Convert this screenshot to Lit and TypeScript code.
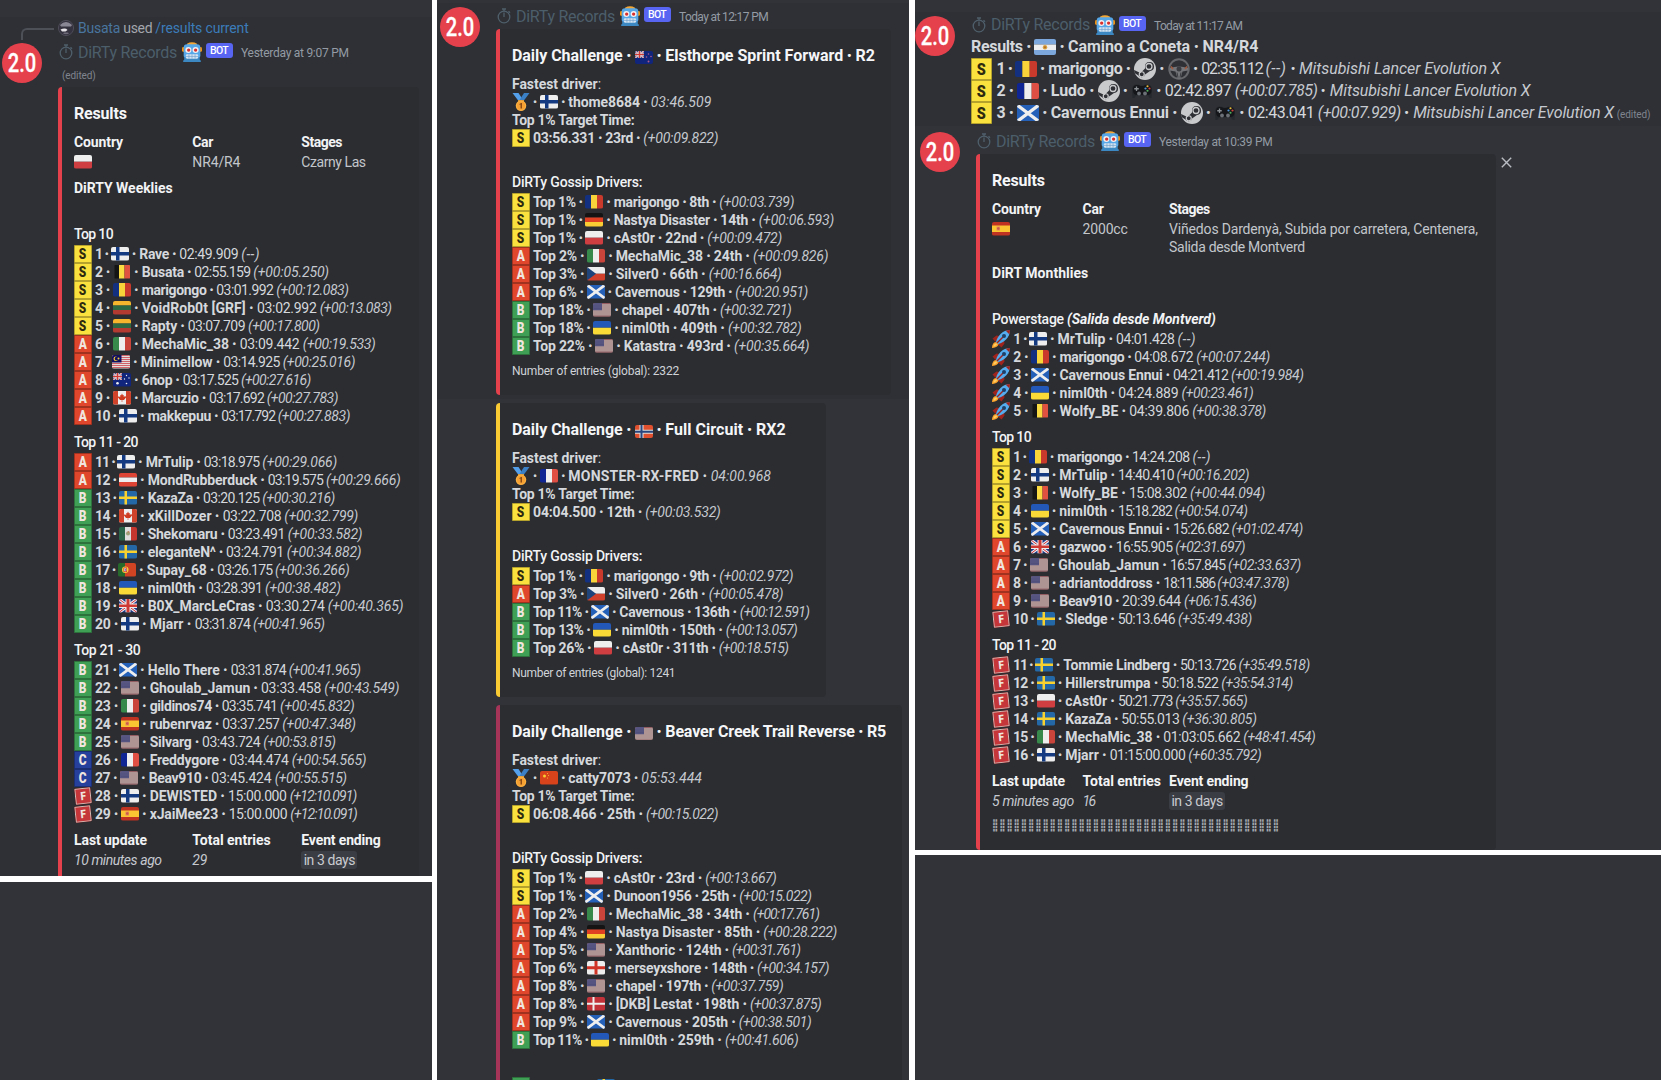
import { LitElement, html, css, svg, nothing, TemplateResult } from "lit";
import { customElement } from "lit/decorators.js";

/* Horizontal measures in the data are in thirds of a pixel. */
const U = 3;

type Part = TemplateResult | typeof nothing;

const px = (n: number) => `width:${(n / U).toFixed(2)}px`;

const point = html`<i class="pt">•</i>`;

/** A run of text whose tracking is adjusted so that it fills `w`. */
const fit = (text: string, w: number, cls = ""): Part =>
  html`<span class="fit ${cls}" style=${px(w)} data-w=${w / U}>${text.split("•").map((s, n) => (n ? [point, s] : s))}</span>`;

const dotBetween = (w: number): Part => html`<span class="mid" style=${px(w)}>${point}</span>`;

/* ---------- flags ---------- */
const r = (x: number, y: number, w: number, h: number, f: string) =>
  svg`<rect x=${x} y=${y} width=${w} height=${h} fill=${f}></rect>`;
const tri = (a: string, b: string, c: string) => [r(0, 0, 12, 27, a), r(12, 0, 12, 27, b), r(24, 0, 12, 27, c)];
const bars = (a: string, b: string, c: string) => [r(0, 0, 36, 9, a), r(0, 9, 36, 9, b), r(0, 18, 36, 9, c)];
const cross = (bg: string, fg: string) => [r(0, 0, 36, 27, bg), r(10, 0, 7, 27, fg), r(0, 10, 36, 7, fg)];
const union = (w: number, h: number) => svg`
  <svg x="0" y="0" width=${w} height=${h} viewBox="0 0 36 27" preserveAspectRatio="none">
    ${r(0, 0, 36, 27, "#1f3a86")}
    <path d="M0 0L36 27M36 0L0 27" stroke="#eee" stroke-width="6"></path>
    <path d="M0 0L36 27M36 0L0 27" stroke="#cf2b35" stroke-width="2"></path>
    ${r(13, 0, 10, 27, "#eee")}${r(0, 9, 36, 9, "#eee")}
    ${r(15, 0, 6, 27, "#cf3a35")}${r(0, 11, 36, 5, "#cf3a35")}
  </svg>`;
const star = (x: number, y: number, s = 1.5, f = "#eee") => svg`<circle cx=${x} cy=${y} r=${s} fill=${f}></circle>`;
const leaf = svg`<path d="M18 5l2 4 2-1-.6 4 3-2 2 2.500-4.500 5.500H14.100L9.600 12.500l2-2 3 2-.6-4.500 2 1zM17.400 17h1.200v5h-1.200z" fill="#cf3b1f"></path>`;

const FLAGS: Record<string, () => unknown> = {
  fi: () => cross("#eeeeee", "#143a82"),
  se: () => [r(0, 0, 36, 27, "#2468a8"), r(11, 0, 5, 27, "#f8d12e"), r(0, 11, 36, 5, "#f8d12e")],
  dk: () => [r(0, 0, 36, 27, "#c23038"), r(11, 0, 4, 27, "#eee"), r(0, 11.5, 36, 4, "#eee")],
  no: () => [r(0, 0, 36, 27, "#e0502f"), r(9, 0, 8, 27, "#ddd"), r(0, 9.5, 36, 8, "#ddd"), r(11, 0, 4, 27, "#29467e"), r(0, 11.5, 36, 4, "#29467e")],
  en: () => [r(0, 0, 36, 27, "#eee"), r(15, 0, 6, 27, "#cf3427"), r(0, 10.5, 36, 6, "#cf3427")],
  ro: () => tri("#12307f", "#f8d43a", "#c9392c"),
  fr: () => tri("#0f2593", "#eeeeee", "#e04f43"),
  it: () => tri("#36894a", "#eeeeee", "#c9453c"),
  mx: () => [tri("#2a6549", "#dddddd", "#c5362e"), star(18, 13, 4, "#9aa27a"), star(19, 10, 2, "#b98a62")],
  be: () => [r(3, 0, 9, 27, "#141414"), r(12, 0, 11, 27, "#fadc42"), r(23, 0, 11, 27, "#e0513f")],
  lt: () => bars("#f5b52c", "#2d6a44", "#b23a30"),
  at: () => bars("#dd4433", "#eeeeee", "#dd4433"),
  de: () => bars("#141414", "#df4023", "#f9cd33"),
  ar: () => [bars("#7ba7dc", "#eeeeee", "#7ba7dc"), star(18, 13.5, 3.6, "#d99f3c"), star(18, 13.5, 1.8, "#b0702a")],
  pl: () => [r(0, 0, 36, 13.5, "#eeeeee"), r(0, 13.5, 36, 13.5, "#cf3f41")],
  ua: () => [r(0, 0, 36, 13.5, "#2358b8"), r(0, 13.5, 36, 13.5, "#f9da37")],
  es: () => [r(0, 0, 36, 27, "#bf3322"), r(0, 7, 36, 13, "#fac632"), r(9, 9, 7, 8, "#e58a5c"), star(12.5, 13, 2.4, "#c9574a")],
  cn: () => [r(0, 0, 36, 27, "#d8431b"), star(9, 10, 3, "#f8cd32"), star(15, 5, 1, "#f8cd32"), star(17, 9, 1, "#f8cd32"), star(15, 14, 1, "#f8cd32")],
  cz: () => [r(0, 0, 36, 13.5, "#eeeeee"), r(0, 13.5, 36, 13.5, "#d0402a"), svg`<path d="M0 0L18 13.500L0 27z" fill="#1f447c"></path>`],
  sc: () => [r(0, 0, 36, 27, "#2460b8"), svg`<path d="M0 0L36 27M36 0L0 27" stroke="#eee" stroke-width="5.500"></path>`],
  ca: () => [r(0, 0, 36, 27, "#eeeeee"), r(0, 0, 10, 27, "#d0432a"), r(26, 0, 10, 27, "#d0432a"), leaf],
  pt: () => [r(0, 0, 14, 27, "#26692a"), r(14, 0, 22, 27, "#d04423"), star(14.5, 13.5, 6.5, "#f5cc3c"), r(11, 9, 7, 9, "#d8382e"), r(12.5, 10.5, 4, 6, "#e8e8f4"), r(13.7, 11.5, 1.6, 4, "#2a4a9a")],
  us: () => [r(0, 0, 36, 27, "#ae9493"), r(0, 0, 36, 1.6, "#8c4e56"), r(0, 25.4, 36, 1.6, "#8c4e56"), r(0, 0, 18, 14.5, "#55537f"),
    [4, 8, 12, 16].map((x) => [star(x, 3.5, 0.7, "#77759b"), star(x, 11.5, 0.7, "#33315f")])],
  my: () => [r(0, 0, 36, 27, "#e4dcdc"), [0, 4, 8, 12, 16, 20, 24].map((y) => r(0, y, 36, 2, "#cf6168")), r(0, 0, 19, 15, "#10105f"),
    star(7.5, 7.5, 4.5, "#f3c93a"), star(9.2, 7, 3.7, "#10105f"), star(13, 7, 2, "#f3c93a")],
  gb: () => union(36, 27),
  au: () => [r(0, 0, 36, 27, "#10257b"), union(18, 14), star(9, 20.5, 2.6), star(27, 5, 1.4), star(23, 12, 1.4), star(32, 10, 1.4), star(27, 21, 1.6)],
  nz: () => [r(0, 0, 36, 27, "#10257b"), union(18, 14), star(27, 6, 1.6, "#b5598a"), star(23, 12, 1.6, "#b5598a"), star(32, 11, 1.6, "#b5598a"), star(27, 21, 1.9, "#b5598a")],
};

const flag = (code: string, cls = ""): Part => html`<svg class="flag ${cls}" viewBox="0 0 36 27">${(FLAGS[code] ?? FLAGS.fi)()}</svg>`;

/* ---------- small pictures ---------- */
const medal = html`<svg class="emo" viewBox="0 0 36 36">
  <path d="M1 0h12l9 14-6 6z" fill="#55a0ea"></path><path d="M35 0H24l-9 14 6 5z" fill="#3b7fc4"></path>
  <path d="M12 14h12v5H12z" fill="#d99a3a"></path><circle cx="18" cy="25.500" r="10.500" fill="#fbb040"></circle>
  <circle cx="18" cy="25.500" r="8" fill="#f4a032"></circle>
  <path d="M15 22l3-2h2v11h-3v-8l-2 1z" fill="#8a4b14"></path></svg>`;

const rocket = html`<svg class="emo" viewBox="0 0 36 36">
  <path d="M1 17l8-6 6 1-8 12z" fill="#a0241e"></path><path d="M19 35l6-8-1-6-12 8z" fill="#a0241e"></path>
  <path d="M0 36c0-6 3-12 8-12s6 4 4 7-7 5-12 5z" fill="#fba32b"></path><path d="M3 33c0-3 2-6 5-6s2 3 0 4-3 2-5 2z" fill="#fdd067"></path>
  <path d="M36 0c-7 0-14 3-19 8S9 19 8 24l4 4c5-1 11-4 16-9S36 7 36 0z" fill="#55acee"></path>
  <path d="M36 0c-3 0-6 .6-8.500 1.500l7 7C35.500 6 36 3 36 0z" fill="#a0241e"></path>
  <path d="M10 26L22 14" stroke="#a0241e" stroke-width="3"></path>
  <circle cx="24" cy="12" r="4" fill="#1f3f66"></circle></svg>`;

const robot = html`<svg class="robot" viewBox="0 0 36 36">
  <path d="M9 3q9-5 18 0v4H9z" fill="#f4a636"></path>
  <rect x="0" y="9" width="5" height="9" rx="2.500" fill="#f4900c"></rect><rect x="31" y="9" width="5" height="9" rx="2.500" fill="#f4900c"></rect>
  <rect x="3" y="4" width="30" height="26" rx="6" fill="#55a7e8"></rect>
  <path d="M4 28h28v4q2 0 2 4H2q0-4 2-4z" fill="#3b88c3"></path>
  <rect x="6" y="9" width="11" height="11" rx="5.500" fill="#f3eef0"></rect><rect x="19" y="9" width="11" height="11" rx="5.500" fill="#f3eef0"></rect>
  <circle cx="12" cy="14.500" r="3" fill="#d8302e"></circle><circle cx="24.500" cy="14.500" r="3" fill="#d8302e"></circle>
  <rect x="7" y="22" width="22" height="8" rx="2" fill="#d4e4f2"></rect>
  <path d="M12.500 22v8M18 22v8M23.500 22v8M7 26h22" stroke="#6fa0cc" stroke-width="1.200"></path></svg>`;

const stopwatch = html`<svg class="watch" viewBox="0 0 14 16">
  <g fill="none" stroke="#4f5f6b" stroke-width="1.300"><circle cx="7" cy="9" r="5.800"></circle>
  <path d="M7 9V4.500M5 1h4M7 1v2M11.500 3.200l1.500 1.500"></path></g></svg>`;

const steam = html`<svg class="pic" viewBox="0 0 44 44">
  <circle cx="22" cy="22" r="22" fill="#c9cacc"></circle>
  <path d="M0 24l13 6 9-9 0-4a9 9 0 1 1 10 9l-10 7a7 7 0 0 1-13 2L1 30z" fill="#2e3035"></path>
  <circle cx="30" cy="17" r="6" fill="none" stroke="#c9cacc" stroke-width="2.600"></circle>
  <circle cx="15.500" cy="32.500" r="5" fill="none" stroke="#c9cacc" stroke-width="2.400"></circle></svg>`;

const wheel = html`<svg class="pic" viewBox="0 0 44 44">
  <circle cx="22" cy="22" r="19.500" fill="none" stroke="#67686c" stroke-width="4"></circle>
  <path d="M4 20q18-6 36 0v5l-11 2-4 14h-6l-4-14-11-2z" fill="#747579"></path>
  <circle cx="22" cy="22" r="5" fill="#3a3b40"></circle>
  <path d="M6 17l4 5M38 17l-4 5" stroke="#a2593c" stroke-width="3"></path>
  <path d="M18 29l2 10M26 29l-2 10" stroke="#3a3b40" stroke-width="2"></path></svg>`;

const gamepad = html`<svg class="pic" viewBox="0 0 44 44">
  <path d="M3 36L2 18Q3 9 11 9q5 0 8 2h6q3-2 8-2 8 0 9 9l-1 18q-5 1-7-5H10q-2 6-7 5z" fill="#25282c"></path>
  <path d="M4 22Q3 10 11 10q5 0 8 2h6q3-2 8-2 8 0 8 12-1 9-10 8H13q-8 1-9-8z" fill="#14161a"></path>
  <path d="M11 13v9M6.500 17.500h9" stroke="#8b9095" stroke-width="2.600"></path>
  <circle cx="16" cy="27" r="3.800" fill="#6c7177"></circle><circle cx="28" cy="27" r="3.800" fill="#6c7177"></circle>
  <circle cx="33" cy="12.500" r="2.200" fill="#e8b93a"></circle><circle cx="37" cy="17" r="2.200" fill="#d5443c"></circle>
  <circle cx="29" cy="17" r="2.200" fill="#4b93d6"></circle><circle cx="33" cy="21.500" r="2.200" fill="#4fae5a"></circle></svg>`;

const avatar = html`<svg class="avatar" viewBox="0 0 40 40">
  <circle cx="20" cy="20" r="20" fill="#e5414c"></circle>
  <text x="5.800" y="28.500" textLength="28.500" lengthAdjust="spacingAndGlyphs">2.0</text></svg>`;

const badge = (t: string, cls = ""): Part => (t === "R" ? rocket : html`<span class="badge t${t} ${cls}"><b>${t}</b></span>`);

/* ---------- data ---------- */
/* tier | rank | flag | name | time | delta | x of name, time, delta, end */
const WEEKLY = [
  ["Top 10", 117, `S|1|fi|Rave|02:49.909|(--)|418,538,724,780
S|2|be|Busata|02:55.159|(+00:05.250)|425,583,760,987
S|3|ro|marigongo|03:01.992|(+00:12.083)|425,649,829,1046
S|4|lt|VoidRob0t [GRF]|03:02.992|(+00:13.083)|425,771,959,1175
S|5|lt|Rapty|03:07.709|(+00:17.800)|425,563,744,959
A|6|it|MechaMic_38|03:09.442|(+00:19.533)|425,719,908,1126
A|7|my|Minimellow|03:14.925|(+00:25.016)|422,670,848,1065
A|8|au|6nop|03:17.525|(+00:27.616)|425,548,723,932
A|9|ca|Marcuzio|03:17.692|(+00:27.783)|425,627,800,1014
A|10|fi|makkepuu|03:17.792|(+00:27.883)|443,664,833,1050`],
  ["Top 11 - 20", 192, `A|11|fi|MrTulip|03:18.975|(+00:29.066)|437,611,787,1011
A|12|at|MondRubberduck|03:19.575|(+00:29.666)|443,803,978,1202
B|13|se|KazaZa|03:20.125|(+00:30.216)|443,609,787,1005
B|14|ca|xKillDozer|03:22.708|(+00:32.799)|443,668,853,1074
B|15|mx|Shekomaru|03:23.491|(+00:33.582)|443,683,863,1087
B|16|se|eleganteN^|03:24.791|(+00:34.882)|443,678,860,1084
B|17|pt|Supay_68|03:26.175|(+00:36.266)|440,652,825,1049
B|18|ua|niml0th|03:28.391|(+00:38.482)|443,618,795,1023
B|19|gb|B0X_MarcLeCras|03:30.274|(+00:40.365)|443,797,983,1210
B|20|fi|Mjarr|03:31.874|(+00:41.965)|449,584,759,974`],
  ["Top 21 - 30", 199, `B|21|sc|Hello There|03:31.874|(+00:41.965)|443,692,866,1082
B|22|us|Ghoulab_Jamun|03:33.458|(+00:43.549)|449,783,973,1198
B|23|it|gildinos74|03:35.741|(+00:45.832)|449,665,840,1064
B|24|es|rubenrvaz|03:37.257|(+00:47.348)|449,667,847,1067
B|25|us|Silvarg|03:43.724|(+00:53.815)|449,606,790,1007
C|26|fr|Freddygore|03:44.474|(+00:54.565)|449,688,875,1099
C|27|us|Beav910|03:45.424|(+00:55.515)|446,634,824,1040
F|28|fi|DEWISTED|15:00.000|(+12:10.091)|449,684,869,1069
F|29|es|xJaiMee23|15:00.000|(+12:10.091)|449,686,871,1071`],
] as const;

const POWER = `R|1|fi|MrTulip|04:01.428|(--)|443,618,803,858
R|2|ro|marigongo|04:08.672|(+00:07.244)|449,673,859,1080
R|3|sc|Cavernous Ennui|04:21.412|(+00:19.984)|449,789,963,1181
R|4|ua|niml0th|04:24.889|(+00:23.461)|449,625,815,1030
R|5|be|Wolfy_BE|04:39.806|(+00:38.378)|449,658,847,1068`;

const MONTHLY = [
  ["Top 10", 117, `S|1|ro|marigongo|14:24.208|(--)|443,667,849,904
S|2|fi|MrTulip|14:40.410|(+00:16.202)|449,625,801,1018
S|3|be|Wolfy_BE|15:08.302|(+00:44.094)|449,658,841,1066
S|4|ua|niml0th|15:18.282|(+00:54.074)|449,625,795,1014
S|5|sc|Cavernous Ennui|15:26.682|(+01:02.474)|449,790,966,1179
A|6|gb|gazwoo|16:55.905|(+02:31.697)|449,618,797,1006
A|7|us|Ghoulab_Jamun|16:57.845|(+02:33.637)|446,781,955,1174
A|8|us|adriantoddross|18:11.586|(+03:47.378)|449,761,923,1138
A|9|us|Beav910|20:39.644|(+06:15.436)|449,637,823,1040
F|10|se|Sledge|50:13.646|(+35:49.438)|467,624,805,1027`],
  ["Top 11 - 20", 192, `F|11|se|Tommie Lindberg|50:13.726|(+35:49.518)|461,811,987,1200
F|12|se|Hillerstrumpa|50:18.522|(+35:54.314)|467,755,935,1149
F|13|pl|cAst0r|50:21.773|(+35:57.565)|467,625,797,1013
F|14|se|KazaZa|50:55.013|(+36:30.805)|467,635,818,1041
F|15|it|MechaMic_38|01:03:05.662|(+48:41.454)|467,761,1001,1217
F|16|fi|Mjarr|01:15:00.000|(+60:35.792)|467,600,836,1055`],
] as const;

interface Daily {
  color: string; flag: string; title: string; titleW: number;
  best: [string, string, string, number, number];
  target: [string, string, number, number];
  rows: string; entries?: [string, number]; width: number;
}

/* tier | share | flag | name • place | delta | x of name, delta, end */
const DAILIES: Daily[] = [
  { color: "red", flag: "nz", title: "Elsthorpe Sprint Forward • R2", titleW: 629, width: 395,
    best: ["fi", "thome8684 • ", "03:46.509", 247, 182], target: ["03:56.331 • 23rd • ", "(+00:09.822)", 331, 225],
    rows: `S|1|ro|marigongo • 8th|(+00:03.739)|552,869,1094
S|1|de|Nastya Disaster • 14th|(+00:06.593)|552,987,1213
S|1|pl|cAst0r • 22nd|(+00:09.472)|552,833,1057
A|2|it|MechaMic_38 • 24th|(+00:09.826)|558,970,1196
A|3|cz|Silver0 • 66th|(+00:16.664)|558,837,1055
A|6|sc|Cavernous • 129th|(+00:20.951)|556,917,1135
B|18|us|chapel • 407th|(+00:32.721)|576,871,1085
B|18|ua|niml0th • 409th|(+00:32.782)|576,895,1115
B|22|us|Katastra • 493rd|(+00:35.664)|582,913,1139`,
    entries: ["Number of entries (global): 2322", 501] },
  { color: "yellow", flag: "no", title: "Full Circuit • RX2", titleW: 361, width: 330,
    best: ["fr", "MONSTER-RX-FRED • ", "04:00.968", 427, 181], target: ["04:04.500 • 12th • ", "(+00:03.532)", 337, 226],
    rows: `S|1|ro|marigongo • 9th|(+00:02.972)|552,869,1091
A|3|cz|Silver0 • 26th|(+00:05.478)|558,837,1061
B|11|sc|Cavernous • 136th|(+00:12.591)|569,930,1139
B|13|ua|niml0th • 150th|(+00:13.057)|576,888,1103
B|26|pl|cAst0r • 311th|(+00:18.515)|579,867,1076`,
    entries: ["Number of entries (global): 1241", 490] },
  { color: "plum", flag: "us", title: "Beaver Creek Trail Reverse • R5", titleW: 662, width: 406,
    best: ["cn", "catty7073 • ", "05:53.444", 219, 182], target: ["06:08.466 • 25th • ", "(+00:15.022)", 339, 216],
    rows: `S|1|pl|cAst0r • 23rd|(+00:13.667)|552,827,1040
S|1|sc|Dunoon1956 • 25th|(+00:15.022)|552,929,1146
A|2|it|MechaMic_38 • 34th|(+00:17.761)|558,970,1168
A|4|de|Nastya Disaster • 85th|(+00:28.222)|558,1001,1222
A|5|us|Xanthoric • 124th|(+00:31.761)|558,907,1112
A|6|en|merseyxshore • 148th|(+00:34.157)|556,982,1198
A|8|us|chapel • 197th|(+00:37.759)|558,845,1061
A|8|dk|[DKB] Lestat • 198th|(+00:37.875)|558,961,1175
A|9|sc|Cavernous • 205th|(+00:38.501)|558,927,1145
B|11|ua|niml0th • 259th|(+00:41.606)|569,886,1106` },
];

const FLAG_LEAD = 86; // flag plus the dot before a name

const resultRow = (line: string, start: number): Part => {
  const [tier, rank, fl, name, time, delta, xs] = line.split("|");
  const [xn, xt, xd, xe] = xs.split(",").map(Number);
  return html`<div class="row">${badge(tier)}<i class="gap"></i>${fit(`${rank} • `, xn - FLAG_LEAD - start, "b")}${flag(fl)}${dotBetween(FLAG_LEAD - 54)}${fit(`${name} • `, xt - xn, "b")}${fit(`${time} `, xd - xt)}${fit(delta, xe - xd, "i")}</div>`;
};

const driverRow = (line: string): Part => {
  const [tier, share, fl, name, delta, xs] = line.split("|");
  const [xn, xd, xe] = xs.split(",").map(Number);
  return html`<div class="row">${badge(tier)}<i class="gap"></i>${fit(`Top ${share}% • `, xn - 85 - 310, "b")}${flag(fl)}${dotBetween(31)}${fit(`${name} • `, xd - xn, "b")}${fit(delta, xe - xd, "i")}</div>`;
};

const block = (title: Part, rows: Part[]): Part => html`<section class="field"><div class="name">${title}</div>${rows}</section>`;

const header = (when: string, w: number): Part => html`<div class="head">
  ${stopwatch}${fit("DiRTy Records", 297, "author")}${robot}<span class="bot">${fit("BOT", 54)}</span>${fit(when, w, "when")}
</div>`;

const column = (label: string, lw: number, value: Part): Part =>
  html`<div class="col"><div class="name">${fit(label, lw, "b")}</div><div class="val">${value}</div></div>`;

@customElement("app-root")
export class AppRoot extends LitElement {
  static styles = css`
    :host { display: block; width: 1662px; height: 1080px; overflow: hidden; background: #fff;
      font-family: Roboto, "Noto Sans", "Liberation Sans", sans-serif; color: #d5d8dc; }
    * { box-sizing: border-box; }
    .board { display: grid; grid-template-columns: 432px 472px 747px; column-gap: 5px; height: 1080px; }
    .board > :nth-child(3) { margin-left: 1px; }
    .lane { display: flex; flex-direction: column; overflow: hidden; height: 1080px; }
    .pane { background: #313338; overflow: hidden; flex: none; }
    .left-pane { height: 876px; padding-top: 17px; }
    .right-pane { height: 850px; padding-top: 12px; }
    .rest { background: #313338; flex: 1; margin-top: 6px; }
    .right-rest { margin-top: 5px; }
    .hover { background: #2e3035; }
    .msg { display: flex; align-items: flex-start; }
    .avatar { flex: none; width: 40px; height: 40px; }
    .avatar text { font: 500 25px Roboto, sans-serif; fill: #fff; stroke: #fff; stroke-width: .3px; }
    .body { flex: 1; min-width: 0; }
    .left-msg { height: 860px; flex-direction: column; }
    .reply { display: flex; align-items: center; height: 22px; padding-left: 21px; font-size: 14px; color: #a3a6ac; }
    .spine { width: 33px; height: 12px; margin: 11px 4px 0 0; border: 2px solid #4e5058; border-width: 2px 0 0 2px; border-radius: 6px 0 0 0; }
    .mini { width: 16px; height: 16px; margin-right: 4px; }
    .blue { color: #49759f; } .cmd { color: #3c7cb9; }
    .left-main { display: flex; padding-left: 2px; }
    .left-main .avatar { margin: 4px 16px 0 0; }
    .left-main .head { margin-top: 1px; }
    .mid-first { height: 396px; padding: 4px 0 0 3px; }
    .mid-first .avatar { margin-right: 16px; }
    .mid-first .head { margin: -3px 0 1px; }
    .mid-pane { flex: 1; padding-top: 3px; }
    .mid-next { padding: 4px 0 0 59px; }
    .mid-next + .mid-next { padding-top: 8px; }
    .talk { height: 114px; padding-top: 4px; }
    .talk .avatar { margin-right: 16px; }
    .talk .head { margin: -3px 0 -1px; }
    .month .head { margin: -3px 0 1px; }
    .month { padding: 6px 0 0 5px; }
    .month .avatar { margin-right: 16px; }
    .head { display: flex; align-items: center; height: 24px; }
    .watch { width: 14px; height: 16px; margin: 0 4.5px 0 1px; }
    .author { font-size: 16px; color: #4c5e6a; margin-left: .5px; }
    .robot { width: 20px; height: 20px; margin: 0 4px 0 5px; }
    .bot { height: 15px; width: 27px; border-radius: 3px; background: #5865f2; color: #fff; font-size: 10.5px; font-weight: 500;
      line-height: 15px; padding-left: 4px; margin: -3px 8px 0 0; }
    .when { font-size: 12px; color: #949ba4; margin-top: 2px; }
    .edited { display: flex; align-items: center; height: 23px; font-size: 10px; color: #80848e; padding-left: 4px; }
    .embed { background: #2b2d31; border-left: 4px solid #e5414c; border-radius: 4px; padding: 16px 0 16px 12px; font-size: 14px; line-height: 18px; }
    .yellow { border-color: #fbcb33; } .plum { border-color: #a63458; }
    .week { width: 361px; height: 800px; }
    .month-embed { width: 520px; height: 696px; flex: none; }
    .title { display: flex; align-items: center; font-size: 16px; height: 22px; font-weight: 700; color: #f5f6f8; margin-bottom: 8px; }
    .title .flag { position: relative; top: 1.5px; }
    .fields { display: grid; margin-bottom: 8px; }
    .week .fields { grid-template-columns: 118.33px 109px 1fr; }
    .month-embed .fields { grid-template-columns: 90.6px 86.5px 1fr; }
    .name { height: 18px; margin-bottom: 2px; color: #f2f3f5; white-space: nowrap; font-weight: 500; }
    .val { min-height: 18px; color: #c3c6cb; }
    .val > * { vertical-align: top; }
    .val .flag { margin-top: 2px; }
    .field { margin-bottom: 8px; }
    .blank { height: 18px; }
    .lead { height: 8px; }
    .row { display: flex; align-items: center; height: 18px; white-space: nowrap; }
    .fit { display: inline-block; white-space: pre; flex: none; }
    .pt { font-style: normal; font-size: .8em; font-weight: 700; line-height: 1; position: relative; top: -.08em; }
    .b { font-weight: 700; }
    .i { font-style: italic; color: #c6c9cf; }
    .pstage { color: #f2f3f5; font-weight: 700; }
    .mid { flex: none; text-align: center; }
    .gap { width: 3.3px; flex: none; }
    .stub { width: 67.7px; flex: none; }
    .flag { width: 18px; height: 13.5px; flex: none; border-radius: 2px; display: inline-block; }
    .emo { width: 18px; height: 18px; flex: none; }
    .badge { width: 17.7px; height: 18px; flex: none; display: flex; justify-content: center; align-items: center; border-radius: 1px;
      font: 700 14px/18px Roboto, sans-serif; color: #f0e6df; box-shadow: inset 0 0 0 1px rgba(0,0,0,.28); }
    .badge b { transform: scaleX(.85); }
    .tS { background: #fbe13e; color: #2d2a10; } .tA { background: #e0462b; } .tB { background: #3f9f54; } .tC { background: #25409d; }
    .tF { height: 15.5px; width: 15.5px; margin: 0 1.1px; background: #c5363b; box-shadow: inset 0 0 0 1px #cdbcb4; transform: rotate(-6deg); font-size: 11.5px; line-height: 14px; }
    .pill { display: inline-block; background: #3b3d44; border-radius: 3px; padding: 0 2.3px; height: 18px; color: #c9cbd0; }
    .foot { font-size: 12px; line-height: 16px; height: 16px; color: #d0d3d8; }
    .dots { font-family: "DejaVu Sans", sans-serif; font-weight: 700; font-size: 8px; line-height: 16px; height: 16px; color: #a6a9af;
      margin-top: 2px; transform: scaleY(1.55); }
    .post { font-size: 16px; line-height: 22px; }
    .post .row { height: 22px; }
    .post .badge { width: 21.3px; height: 22px; font-size: 17px; line-height: 22px; }
    .post .flag { width: 22px; height: 16.5px; }
    .post .gap { width: 4.2px; }
    .pic { width: 22px; height: 22px; flex: none; }
    .small { font-size: 10px; color: #80848e; margin-left: 3px; position: relative; top: 2px; }
    .close { width: 11px; height: 11px; margin: 3px 0 0 4.5px; flex: none; }
    .withclose { display: flex; align-items: flex-start; }
  `;

  firstUpdated() {
    const runs = [...this.renderRoot.querySelectorAll<HTMLElement>(".fit")];
    const sizes = runs.map((el) => {
      const range = document.createRange();
      range.selectNodeContents(el);
      return range.getBoundingClientRect().width;
    });
    runs.forEach((el, n) => {
      const count = (el.textContent ?? "").length;
      if (count) el.style.letterSpacing = `${((Number(el.dataset.w) - sizes[n]) / count).toFixed(3)}px`;
    });
  }

  private rows(text: string, start: number) {
    return text.split("\n").map((l) => resultRow(l, start));
  }

  private daily(d: Daily) {
    return html`<article class="embed ${d.color}" style="width:${d.width}px">
      <div class="title">${fit("Daily Challenge • ", 369)}${flag(d.flag)}${dotBetween(37)}${fit(d.title, d.titleW)}</div>
      <div class="row">${fit("Fastest driver", 257, "b")}<span>:</span></div>
      <div class="row">${medal}${dotBetween(30)}${flag(d.best[0])}${dotBetween(31)}${fit(d.best[1], d.best[3], "b")}${fit(d.best[2], d.best[4], "i")}</div>
      <div class="row">${fit("Top 1% Target Time:", 367, "b")}</div>
      <div class="row">${badge("S")}<i class="gap"></i>${fit(d.target[0], d.target[2], "b")}${fit(d.target[1], d.target[3], "i")}</div>
      <div class="blank"></div>
      <div class="lead"></div>
      ${block(fit("DiRTy Gossip Drivers:", 391), d.rows.split("\n").map(driverRow))}
      ${d.entries
        ? html`<div class="foot">${fit(d.entries[0], d.entries[1])}</div>`
        : html`<div class="name"></div><div class="row">${badge("B")}<i class="stub"></i>${flag("se")}</div>`}
    </article>`;
  }

  render() {
    return html`<main class="board">
      <div class="lane">
        <div class="pane left-pane"><div class="msg hover left-msg">
          <div class="reply"><i class="spine"></i>
            <svg class="mini" viewBox="0 0 16 16"><circle cx="8" cy="8" r="7.600" fill="#35323f" stroke="#55535f" stroke-width=".8"></circle><path d="M2 5q6-6 12 0l-1 1.500H3z" fill="#8a8794"></path><path d="M2.500 9.500q5-2 7 .5l-2 1.500H4z" fill="#e6e3e8"></path><path d="M5 13.500q3 1.500 6 0l-1-1H6z" fill="#6f6c7a"></path></svg>
            ${fit("Busata ", 136, "blue")}${fit("used ", 96)}${fit("/results current", 280, "cmd")}</div>
          <div class="left-main">${avatar}<div class="body">
            ${header("Yesterday at 9:07 PM", 323)}
            <div class="edited">${fit("(edited)", 101)}</div>
            <article class="embed week">
              <div class="title">${fit("Results", 158)}</div>
              <div class="fields">
                ${column("Country", 147, flag("pl"))}${column("Car", 62, fit("NR4/R4", 144))}${column("Stages", 122, fit("Czarny Las", 193))}
              </div>
              ${block(fit("DiRTY Weeklies", 296, "b"), [html`<div class="blank"></div>`])}
              ${WEEKLY.map(([t, w, rows]) => block(fit(t, w), this.rows(rows, 285)))}
              <div class="fields">
                ${column("Last update", 219, fit("10 minutes ago", 263, "i"))}${column("Total entries", 235, fit("29", 45, "i"))}
                ${column("Event ending", 238, html`<span class="pill">${fit("in 3 days", 154)}</span>`)}
              </div>
            </article>
          </div></div>
        </div></div>
        <div class="rest"></div>
      </div>

      <div class="lane"><div class="pane mid-pane">
        <div class="msg hover mid-first">${avatar}<div class="body">
          ${header("Today at 12:17 PM", 267)}
          ${this.daily(DAILIES[0])}
        </div></div>
        <div class="mid-next">${this.daily(DAILIES[1])}</div>
        <div class="mid-next">${this.daily(DAILIES[2])}</div>
      </div></div>

      <div class="lane">
        <div class="pane right-pane">
          <div class="msg hover talk">${avatar}<div class="body post">
            ${header("Today at 11:17 AM", 265)}
            <div class="row">${fit("Results • ", 190, "b")}${flag("ar")}${dotBetween(35)}${fit("Camino a Coneta • NR4/R4", 571, "b")}</div>
            <div class="row">${badge("S")}<i class="gap"></i>${fit("1 • ", 55, "b")}${flag("ro")}${dotBetween(34)}${fit("marigongo • ", 257, "b")}${steam}${dotBetween(36)}${wheel}${dotBetween(34)}${fit("02:35.112 ", 193)}${fit("(--) ", 76, "i")}${fit("• ", 25)}${fit("Mitsubishi Lancer Evolution X", 604, "i")}</div>
            <div class="row">${badge("S")}<i class="gap"></i>${fit("2 • ", 61, "b")}${flag("fr")}${dotBetween(36)}${fit("Ludo • ", 141, "b")}${steam}${dotBetween(33)}${gamepad}${dotBetween(36)}${fit("02:42.897 ", 210)}${fit("(+00:07.785) ", 258, "i")}${fit("• ", 27)}${fit("Mitsubishi Lancer Evolution X", 602, "i")}</div>
            <div class="row">${badge("S")}<i class="gap"></i>${fit("3 • ", 61, "b")}${flag("sc")}${dotBetween(36)}${fit("Cavernous Ennui • ", 390, "b")}${steam}${dotBetween(33)}${gamepad}${dotBetween(36)}${fit("02:43.041 ", 210)}${fit("(+00:07.929) ", 259, "i")}${fit("• ", 27)}${fit("Mitsubishi Lancer Evolution X", 602, "i")}${fit("(edited)", 101, "small")}</div>
          </div></div>
          <div class="msg month">${avatar}<div class="body">
            ${header("Yesterday at 10:39 PM", 340)}
            <div class="withclose"><article class="embed month-embed">
              <div class="title">${fit("Results", 158)}</div>
              <div class="fields">
                ${column("Country", 147, flag("es"))}${column("Car", 63, fit("2000cc", 135))}
                ${column("Stages", 122, html`${fit("Viñedos Dardenyà, Subida por carretera, Centenera,", 926)}<br />${fit("Salida desde Montverd", 407)}`)}
              </div>
              ${block(fit("DiRT Monthlies", 289, "b"), [html`<div class="blank"></div>`])}
              ${block(html`${fit("Powerstage ", 225)}${fit("(Salida desde Montverd)", 446, "i pstage")}`, this.rows(POWER, 310))}
              ${MONTHLY.map(([t, w, rows]) => block(fit(t, w), this.rows(rows, 310)))}
              <div class="fields">
                ${column("Last update", 219, fit("5 minutes ago", 246, "i"))}${column("Total entries", 235, fit("16", 35, "i"))}
                ${column("Event ending", 238, html`<span class="pill">${fit("in 3 days", 154)}</span>`)}
              </div>
              <div class="dots">${fit("⣿".repeat(40), 864)}</div>
            </article>
            <svg class="close" viewBox="0 0 11 11"><path d="M.8.8l9.400 9.400M10.200.8L.8 10.200" stroke="#b9bcc2" stroke-width="1.400"></path></svg></div>
          </div></div>
        </div>
        <div class="rest right-rest"></div>
      </div>
    </main>`;
  }
}
